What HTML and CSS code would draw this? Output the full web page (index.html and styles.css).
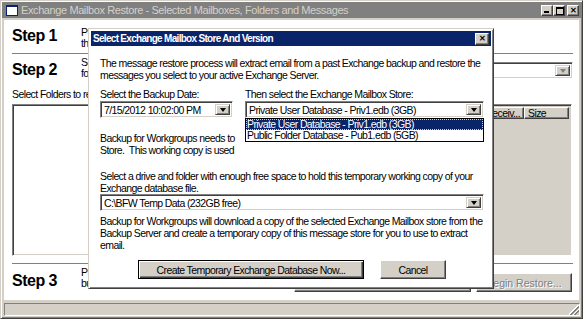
FILE: index.html
```html
<!DOCTYPE html>
<html lang="en">
<head>
<meta charset="UTF-8">
<meta name="viewport" content="width=device-width, initial-scale=1.0">
<title>Exchange Mailbox Restore</title>
<link rel="stylesheet" href="styles.css">
</head>
<body>
  <div class="window">
    <div class="titlebar">
      <span class="app-icon"></span>
      <span class="title-text">Exchange Mailbox Restore - Selected Mailboxes, Folders and Messages</span>
      <div class="title-buttons">
        <span class="tbtn tbtn-min"></span>
        <span class="tbtn tbtn-max"></span>
        <span class="tbtn tbtn-close">&#x2715;</span>
      </div>
    </div>

    <div class="client">
      <div class="step step1">
        <div class="step-name">Step 1</div>
        <div class="step-desc">Press the Select Backup button to pick a date<br>the Exchange Mailbox Store to restore from.</div>
      </div>
      <div class="sep"></div>

      <div class="step step2">
        <div class="step-name">Step 2</div>
        <div class="step-desc">Select the mailbox to restore<br>folders and messages from.</div>
        <div class="combo combo-disabled">
          <div class="combo-text"></div>
          <div class="combo-btn"><span class="arrow"></span></div>
        </div>
      </div>

      <div class="label">Select Folders to restore</div>
      <div class="panes">
        <div class="listbox"></div>
        <div class="listview">
          <div class="lv-header">
            <span class="lv-col lv-col-wide">Subject</span>
            <span class="lv-col lv-col-date">Date Receiv...</span>
            <span class="lv-col lv-col-size">Size</span>
          </div>
        </div>
      </div>
      <div class="sep sep-low"></div>

      <div class="step step3">
        <div class="step-name">Step 3</div>
        <div class="step-desc">Press Begin Restore to restore the messages<br>but first check the selections.</div>
        <div class="step3-buttons">
          <button class="btn btn-preview" disabled>Preview...</button>
          <button class="btn btn-restore" disabled>Begin Restore...</button>
        </div>
      </div>
    </div>

    <div class="statusbar">
      <div class="status-panel"></div>
      <span class="grip"></span>
    </div>
  </div>

  <!-- dialog over the main window -->
  <div class="dialog">
    <div class="dlg-title">
      <span class="dlg-title-text">Select Exchange Mailbox Store And Version</span>
      <span class="tbtn dlg-close">&#x2715;</span>
    </div>
    <div class="dlg-body">
      <p class="dlg-text intro">The message restore process will extract email from a past Exchange backup and restore the<br>messages you select to your active Exchange Server.</p>

      <div class="pick-row">
        <div class="pick-date">
          <div class="dlg-text">Select the Backup Date:</div>
          <div class="combo combo-date">
            <div class="combo-text">7/15/2012 10:02:00 PM</div>
            <div class="combo-btn"><span class="arrow"></span></div>
          </div>
          <p class="dlg-text note">Backup for Workgroups needs to<br>Store.&nbsp; This working copy is used</p>
        </div>
        <div class="pick-store">
          <div class="dlg-text">Then select the Exchange Mailbox Store:</div>
          <div class="combo combo-store">
            <div class="combo-text">Private User Database - Priv1.edb (3GB)</div>
            <div class="combo-btn"><span class="arrow"></span></div>
          </div>
          <ul class="droplist">
            <li class="selected">Private User Database - Priv1.edb (3GB)</li>
            <li>Public Folder Database - Pub1.edb (5GB)</li>
          </ul>
        </div>
      </div>

      <p class="dlg-text drive-text">Select a drive and folder with enough free space to hold this temporary working copy of your<br>Exchange database file.</p>
      <div class="combo combo-drive">
        <div class="combo-text">C:\BFW Temp Data (232GB free)</div>
        <div class="combo-btn"><span class="arrow"></span></div>
      </div>

      <p class="dlg-text outro">Backup for Workgroups will download a copy of the selected Exchange Mailbox store from the<br>Backup Server and create a temporary copy of this message store for you to use to extract<br>email.</p>

      <div class="dlg-buttons">
        <button class="btn btn-default">Create Temporary Exchange Database Now...</button>
        <button class="btn btn-cancel">Cancel</button>
      </div>
    </div>
  </div>
</body>
</html>
```
FILE: styles.css
```css
body{
  margin: 0;
  font-family: "Liberation Sans", Arial, sans-serif;
  font-size: 10.5px;
  letter-spacing: -0.6px;
  color: black;
}

/* main window */
.window{
  width: 583px;
  height: 319px;
  box-sizing: border-box;
  background-color: #d4d0c8;
  border: 1px solid;
  border-color: #d4d0c8 #404040 #404040 #d4d0c8;
  box-shadow: inset 1px 1px #fff, inset -1px -1px #808080;
  padding: 1px;
  display: flex;
  flex-direction: column;
}

.titlebar{  /* inactive caption */
  height: 16px;
  background-color: #808080;
  display: flex;
  align-items: center;
  padding: 0 2px 0 4px;
}

.app-icon{
  width: 10px;
  height: 8px;
  background: #fff;
  border: 1px solid #0a246a;
  border-top-width: 2px;
  margin-right: 3px;
}

.title-text{
  color: #d4d0c8;
  font-size: 11px;
  letter-spacing: -0.4px;
  white-space: nowrap;
}

.title-buttons{
  margin-left: auto;
  display: flex;
}

.tbtn{
  width: 12px;
  height: 11px;
  box-sizing: border-box;
  background: #d4d0c8;
  border: 1px solid;
  border-color: #fff #404040 #404040 #fff;
  box-shadow: inset -1px -1px #808080;
  position: relative;
  font-size: 8px;
  font-weight: bold;
  letter-spacing: 0;
  line-height: 9px;
  text-align: center;
  color: black;
}

.tbtn-min::after{
  content: "";
  position: absolute;
  left: 2px;
  bottom: 2px;
  width: 5px;
  height: 2px;
  background: black;
}

.tbtn-max{
  margin-right: 2px;
}

.tbtn-max::after{
  content: "";
  position: absolute;
  left: 2px;
  top: 1px;
  width: 6px;
  height: 5px;
  border: 1px solid black;
  border-top-width: 2px;
}

/* client area */
.client{
  flex: 1;
  margin: 2px 2px 0 2px;
  background: white;
  padding: 0 6px 0 8px;
  display: flex;
  flex-direction: column;
}

.step{
  display: flex;
}

.step-name{
  width: 69px;
  flex: none;
  font-size: 16px;
  font-weight: bold;
  letter-spacing: -0.5px;
  line-height: 18px;
}

.step-desc{
  line-height: 11px;
  white-space: nowrap;
}

.step1{
  height: 33px;
}

.step1 .step-name{
  padding-top: 7px;
}

.step1 .step-desc{
  padding-top: 7px;
}

.sep{
  height: 1px;
  background: #808080;
  flex: none;
}

.step2{
  height: 33px;
}

.step2 .step-name{
  padding-top: 7px;
}

.step2 .step-desc{
  padding-top: 3px;
}

.step2 .combo{
  margin-left: auto;
  margin-top: 8px;
  width: 250px;
}

.label{
  margin-top: 1px;
  line-height: 12px;
}

.panes{
  margin-top: 4px;
  height: 152px;
  display: flex;
  gap: 6px;
  margin-right: 1px;
}

.listbox{
  width: 170px;
  box-sizing: border-box;
  border: 1px solid;
  border-color: #808080 #fff #fff #808080;
  box-shadow: inset 1px 1px #404040, inset -1px -1px #d4d0c8;
}

.listview{
  flex: 1;
  box-sizing: border-box;
  border: 1px solid;
  border-color: #808080 #fff #fff #808080;
  box-shadow: inset 1px 1px #404040, inset -1px -1px #d4d0c8;
  background: #d4d0c8;
  padding: 2px;
}

.lv-header{
  display: flex;
  height: 12px;
}

.lv-col{
  flex: none;
  box-sizing: border-box;
  background: #d4d0c8;
  border: 1px solid;
  border-color: #fff #404040 #404040 #fff;
  box-shadow: inset -1px -1px #808080;
  line-height: 10px;
  padding-left: 3px;
  white-space: nowrap;
  overflow: hidden;
}

.lv-col-wide{
  flex: 1;
}

.lv-col-date{
  width: 90px;
  text-align: right;
  padding-right: 3px;
}

.lv-col-size{
  width: 45px;
}

.sep-low{
  margin-top: 7px;
}

.step3{
  flex: 1;
}

.step3 .step-name{
  padding-top: 8px;
}

.step3 .step-desc{
  padding-top: 3px;
}

.step3-buttons{
  margin-left: auto;
  padding-top: 9px;
  display: flex;
  gap: 5px;
  margin-right: 1px;
}

/* buttons */
.btn{
  height: 19px;
  box-sizing: border-box;
  background: #d4d0c8;
  border: 1px solid;
  border-color: #fff #404040 #404040 #fff;
  box-shadow: inset -1px -1px #808080, inset 1px 1px #d4d0c8;
  font-family: inherit;
  font-size: 10.5px;
  letter-spacing: -0.6px;
  color: black;
  padding: 0;
}

.btn:disabled{
  color: #808080;
  text-shadow: 1px 1px #fff;
}

.btn-preview{
  width: 177px;
}

.btn-restore{
  width: 96px;
  letter-spacing: 0;
}

/* status bar */
.statusbar{
  height: 13px;
  margin: 3px 1px 1px 2px;
  display: flex;
  position: relative;
}

.status-panel{
  flex: 1;
  border: 1px solid;
  border-color: #808080 #fff #fff #808080;
}

.grip{
  position: absolute;
  right: 1px;
  bottom: 1px;
  width: 10px;
  height: 10px;
  background: linear-gradient(135deg, transparent 45%, #fff 45%, #fff 52%, #808080 52%, #808080 62%, transparent 62%, transparent 68%, #fff 68%, #fff 74%, #808080 74%, #808080 84%, transparent 84%);
}

/* dialog */
.dialog{
  position: absolute;
  left: 88px;
  top: 28px;
  width: 406px;
  height: 261px;
  box-sizing: border-box;
  background: white;
  border: 1px solid;
  border-color: #d4d0c8 #404040 #404040 #d4d0c8;
  box-shadow: inset 1px 1px #fff, inset -1px -1px #808080;
  padding: 2px;
}

.dlg-title{
  height: 15px;
  background: #0a246a;
  display: flex;
  align-items: center;
  padding: 0 2px 0 2px;
}

.dlg-title-text{
  color: white;
  font-size: 10px;
  font-weight: bold;
  letter-spacing: -0.7px;
  white-space: nowrap;
}

.dlg-close{
  margin-left: auto;
  width: 14px;
  height: 12px;
}

.dlg-body{
  padding: 0 7px 0 9px;
}

.dlg-text{
  line-height: 12px;
  margin: 0;
  white-space: nowrap;
}

.intro{
  padding-top: 11px;
}

.pick-row{
  margin-top: 7px;
  display: flex;
}

.pick-date{
  width: 143px;
  flex: none;
}

.pick-store{
  flex: 1;
  position: relative;
  padding-left: 2px;
}

.combo{
  height: 17px;
  box-sizing: border-box;
  background: white;
  border: 1px solid;
  border-color: #808080 #fff #fff #808080;
  box-shadow: inset 1px 1px #404040, inset -1px -1px #d4d0c8;
  display: flex;
  padding: 2px;
  margin-top: 1px;
}

.combo-text{
  flex: 1;
  line-height: 13px;
  padding-left: 1px;
  white-space: nowrap;
}

.combo-btn{
  width: 15px;
  box-sizing: border-box;
  background: #d4d0c8;
  border: 1px solid;
  border-color: #d4d0c8 #404040 #404040 #d4d0c8;
  box-shadow: inset 1px 1px #fff, inset -1px -1px #808080;
  display: flex;
  align-items: center;
  justify-content: center;
}

.arrow{
  width: 0;
  height: 0;
  border-left: 3.5px solid transparent;
  border-right: 3.5px solid transparent;
  border-top: 4px solid black;
}

.combo-disabled .arrow{
  border-top-color: #808080;
}

.combo-date{
  width: 133px;
}

.note{
  margin-top: 14px;
}

.droplist{  /* opened list of the store combo */
  position: absolute;
  left: 2px;
  right: 0;
  top: 30px;
  margin: 0;
  padding: 0;
  list-style: none;
  background: white;
  border: 1px solid black;
}

.droplist li{
  height: 11px;
  line-height: 11px;
  padding-left: 1px;
  white-space: nowrap;
}

.droplist .selected{
  background: #0a246a;
  color: white;
  outline: 1px dotted #d4d0c8;
  outline-offset: -1px;
}

.drive-text{
  margin-top: 14px;
}

.combo-drive{
  margin-top: 0;
}

.outro{
  margin-top: 4px;
}

.dlg-buttons{
  margin-top: 9px;
  display: flex;
  justify-content: center;
  gap: 16px;
}

.btn-default{
  width: 226px;
  border: 1px solid black;
  box-shadow: inset 1px 1px #fff, inset -1px -1px #404040, inset -2px -2px #808080;
}

.btn-cancel{
  width: 66px;
}
```
